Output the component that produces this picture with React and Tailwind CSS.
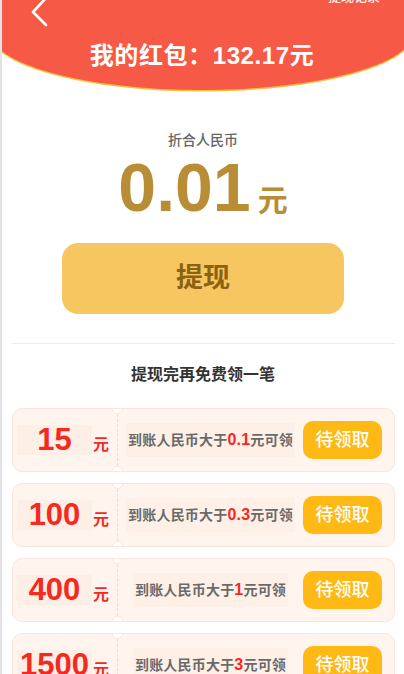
import React from 'react';

const FONT = { fontFamily: '"Liberation Sans", "Noto Sans CJK SC", sans-serif' };

const rows = [
  { amount: '15', need: '0.1' },
  { amount: '100', need: '0.3' },
  { amount: '400', need: '1' },
  { amount: '1500', need: '3' },
];

function RewardCard({ amount, need }) {
  return (
    <div className="relative flex items-center h-[64px] rounded-[10px] bg-[#fff4ee] border border-[#fbe5da] overflow-hidden">
      {/* ticket notches */}
      <span className="absolute left-[99px] -top-[6px] w-[11px] h-[11px] rounded-full bg-white border border-[#fbe5da]" />
      <span className="absolute left-[99px] -bottom-[6px] w-[11px] h-[11px] rounded-full bg-white border border-[#fbe5da]" />

      <div className="w-[104px] h-full flex items-center pl-[4px]">
        <div className="flex items-baseline">
          <span className="w-[75px] text-center bg-[#fdefe6] text-[#f42a22] font-bold text-[31px] leading-[30px]">{amount}</span>
          <span className="ml-[1px] text-[#f42a22] font-bold text-[16px] leading-none">元</span>
        </div>
      </div>

      <div className="flex-1 h-[52px] border-l border-dashed border-[#f3dacd] flex items-center justify-center">
        <span className="px-[2px] py-[6px] bg-[#fef0e7] text-[#6a6a6a] font-bold text-[14px] tracking-[0.2px] leading-[22px]">
          到账人民币大于<span className="text-[#f42a22] text-[16px]">{need}</span>元可领
        </span>
      </div>

      <button className="mr-[12px] w-[79px] h-[38px] rounded-[10px] bg-[#ffb915] text-white text-[18px] font-medium">
        待领取
      </button>
    </div>
  );
}

export default function App() {
  return (
    <div className="min-h-screen bg-white border-l-2 border-[#e1e2ea] overflow-hidden" style={FONT}>
      {/* red header */}
      <div className="relative -ml-[12px] w-[424px] h-[90px] bg-[#f65946] rounded-b-[50%_58px] shadow-[0_1.5px_0_#f8bf3a] flex justify-center">
        <svg className="absolute left-[40px] -top-[4px]" width="20" height="32" viewBox="0 0 20 32" fill="none">
          <polyline points="16,2 3,16 16,29" stroke="white" strokeWidth="2.6" strokeLinecap="round" strokeLinejoin="round" />
        </svg>
        <span className="absolute right-[34px] -top-[11px] text-white/90 text-[13px] leading-[15px] font-medium">提现记录</span>
        <h1 className="pt-[40px] text-white font-bold text-[24px] leading-[32px] tracking-[0.6px]">我的红包：132.17元</h1>
      </div>

      <div className="flex flex-col items-center">
        <div className="mt-[40px] text-[#666] text-[14px] leading-[20px] font-medium">折合人民币</div>
        <div className="mt-[3px] flex items-baseline text-[#b98d35] font-bold">
          <span className="text-[68px] leading-[68px]">0.01</span>
          <span className="ml-[7px] text-[30px] leading-none">元</span>
        </div>
        <button className="mt-[22px] w-[282px] h-[71px] rounded-[16px] bg-[#f6c661] text-[#8a6212] font-bold text-[27px]">
          提现
        </button>
      </div>

      <div className="mt-[29px] ml-[10px] mr-[9px] h-px bg-[#ececec]" />

      <div className="mt-[20px] text-center text-[#333] font-bold text-[16px] leading-[22px]">提现完再免费领一笔</div>

      <div className="mt-[22px] ml-[10px] mr-[9px] flex flex-col gap-[11px] pb-4">
        {rows.map((r) => (
          <RewardCard key={r.amount} {...r} />
        ))}
      </div>
    </div>
  );
}
